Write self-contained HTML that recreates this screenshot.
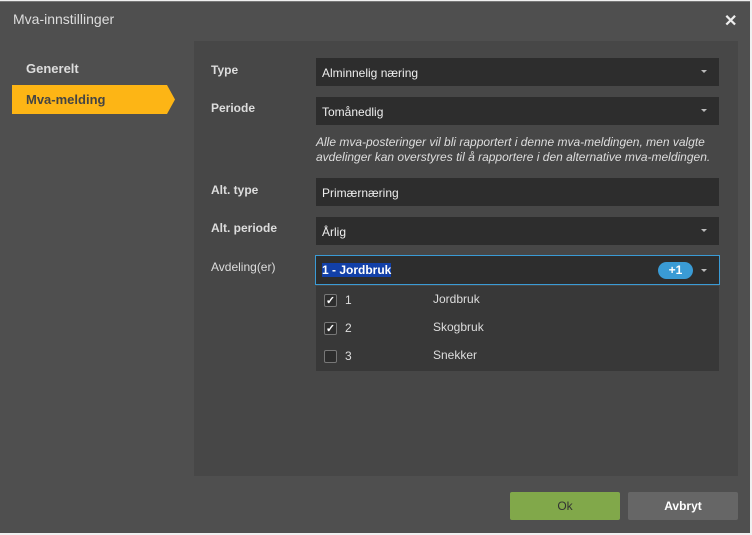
<!DOCTYPE html>
<html><head><style>
*{margin:0;padding:0;box-sizing:border-box}
body{width:752px;height:535px;background:#f0f0f0;font-family:"Liberation Sans",sans-serif;overflow:hidden;position:relative}
.dlg{position:absolute;left:0;top:1px;width:750px;height:532px;background:#4f4f4f;border-top:1px solid #777}
.title{position:absolute;left:13px;top:9px;font-size:14px;color:#ddd}
.close{position:absolute;left:724px;top:9px;color:#eee;font-size:16px;font-weight:bold}
.nav1{position:absolute;left:26px;top:59px;font-size:13px;color:#ddd;font-weight:bold}
.nav2{position:absolute;left:12px;top:83px;width:163px;height:29px;background:#fdb515;clip-path:polygon(0 0,155px 0,163px 50%,155px 100%,0 100%);font-size:13px;font-weight:bold;color:#444;padding:7px 0 0 14px}
.panel{position:absolute;left:194px;top:39px;width:544px;height:435px;background:#474747}
.lbl{position:absolute;left:211px;font-size:12px;color:#ddd;font-weight:bold}
.inp{position:absolute;left:316px;width:403px;height:28px;background:#2d2d2d;color:#eee;font-size:12px;padding:8px 0 0 6px}
.arr{position:absolute;right:12px;top:12px;width:0;height:0;border-left:3px solid transparent;border-right:3px solid transparent;border-top:3px solid #bbb}
.note{position:absolute;left:316px;top:133px;font-size:12px;font-style:italic;color:#ddd;line-height:15px;white-space:nowrap}
.dd{position:absolute;left:316px;top:284px;width:403px;height:85px;background:#383838}
.row{position:absolute;left:0;height:20px;font-size:12px;color:#ddd}
.cb{position:absolute;left:8px;top:2px;width:13px;height:13px;border:1px solid #777;border-radius:2px;background:#2d2d2d;color:#fff;font-size:11px;font-weight:bold;line-height:12px;text-align:center}
.btn{position:absolute;top:490px;width:110px;height:28px;border-radius:2px;font-size:12px;text-align:center;line-height:28px}
</style></head><body>
<div class="dlg">
<div class="title">Mva-innstillinger</div>
<div class="close">✕</div>
<div class="nav1">Generelt</div>
<div class="nav2">Mva-melding</div>
<div class="panel"></div>
<div class="lbl" style="top:61px">Type</div>
<div class="inp" style="top:56px">Alminnelig næring<div class="arr"></div></div>
<div class="lbl" style="top:99px">Periode</div>
<div class="inp" style="top:95px">Tomånedlig<div class="arr"></div></div>
<div class="note">Alle mva-posteringer vil bli rapportert i denne mva-meldingen, men valgte<br>avdelinger kan overstyres til å rapportere i den alternative mva-meldingen.</div>
<div class="lbl" style="top:181px">Alt. type</div>
<div class="inp" style="top:176px">Primærnæring</div>
<div class="lbl" style="top:219px">Alt. periode</div>
<div class="inp" style="top:215px">Årlig<div class="arr"></div></div>
<div class="lbl" style="top:258px;font-weight:normal">Avdeling(er)</div>
<div class="inp" style="top:253px;left:315px;width:405px;height:30px;border:1px solid #3a9bd5;padding:7px 0 0 6px;font-weight:bold"><span style="background:#1240a8;color:#fff">1 - Jordbruk</span>
<div style="position:absolute;left:342px;top:6px;width:35px;height:17px;border-radius:9px;background:#3a9bd5;color:#fff;font-size:12px;text-align:center;line-height:17px">+1</div><div class="arr" style="top:13px"></div></div>
<div class="dd">
<div class="row" style="top:6px;width:403px"><div class="cb">✓</div><span style="position:absolute;left:29px;top:1px">1</span><span style="position:absolute;left:117px;top:0">Jordbruk</span></div>
<div class="row" style="top:34px;width:403px"><div class="cb">✓</div><span style="position:absolute;left:29px;top:1px">2</span><span style="position:absolute;left:117px;top:0">Skogbruk</span></div>
<div class="row" style="top:62px;width:403px"><div class="cb"></div><span style="position:absolute;left:29px;top:1px">3</span><span style="position:absolute;left:117px;top:0">Snekker</span></div>
</div>
<div class="btn" style="left:510px;background:#81a84a;color:#333">Ok</div>
<div class="btn" style="left:628px;background:#666;color:#fff;font-weight:bold">Avbryt</div>
</div>
</body></html>
